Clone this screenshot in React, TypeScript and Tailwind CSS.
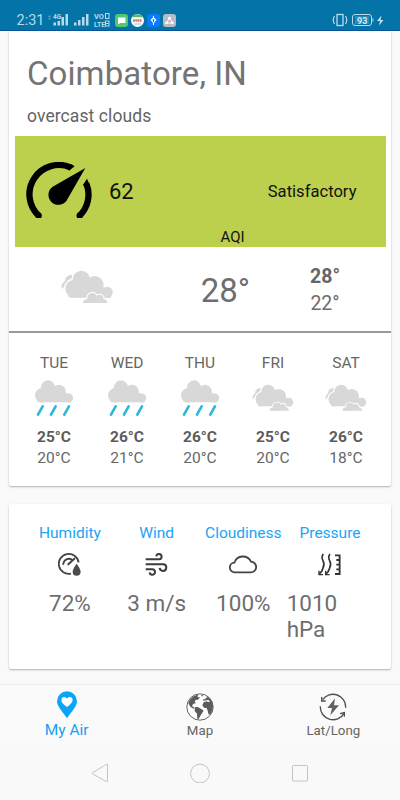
import type { ReactNode } from "react";

type Sky = "rain" | "clouds";

const forecast: { day: string; sky: Sky; high: string; low: string }[] = [
  { day: "TUE", sky: "rain", high: "25°C", low: "20°C" },
  { day: "WED", sky: "rain", high: "26°C", low: "21°C" },
  { day: "THU", sky: "rain", high: "26°C", low: "20°C" },
  { day: "FRI", sky: "clouds", high: "25°C", low: "20°C" },
  { day: "SAT", sky: "clouds", high: "26°C", low: "18°C" },
];

function BigCloud() {
  return (
    <>
      <circle cx="223" cy="116" r="27" />
      <circle cx="244" cy="88" r="26" />
      <circle cx="284" cy="105" r="27" />
      <circle cx="322" cy="127" r="16.500" />
      <path d="M206 136l20-35h60l35 15l12 27H210q-6 0-4-7z" />
    </>
  );
}

function SmallCloud() {
  return (
    <>
      <circle cx="277" cy="144" r="15" />
      <circle cx="299" cy="146" r="11.500" />
      <path d="M249 160q0-13 15-13h45q13 1 13 13z" />
    </>
  );
}

function Overcast({ className }: { className: string }) {
  return (
    <svg viewBox="183 60 157 101" className={className} fill="#d8d8d8">
      <path d="M186 117q-5-14 8-23q2-20 22-20v20l-18 10z" />
      <g fill="#fff" stroke="#fff" strokeWidth="8">
        <BigCloud />
      </g>
      <BigCloud />
      <g fill="#fff" stroke="#fff" strokeWidth="7">
        <SmallCloud />
      </g>
      <SmallCloud />
    </svg>
  );
}

function Rain() {
  return (
    <svg viewBox="105 103 115 108" className="w-[38.3px] h-9" fill="#d8d8d8">
      <circle cx="127" cy="149" r="22" />
      <circle cx="144" cy="125" r="21" />
      <circle cx="177" cy="138" r="20.500" />
      <circle cx="206" cy="157" r="13.500" />
      <path d="M110 162l20-30h48l28 13l8 25h-98q-4 0-6-8z" />
      <path d="M128 182l-14 25M167 182l-14 25M207 182l-14 25" stroke="#2fb8dc" strokeWidth="8" strokeLinecap="round" />
    </svg>
  );
}

function Gauge() {
  return (
    <svg viewBox="78 95 198 170" className="w-[66px] h-[56.7px] -mt-[3px]">
      <path d="M117 257A88 88 0 0 1 213 112" fill="none" stroke="#000" strokeWidth="19" />
      <path d="M259 160A88 88 0 0 1 238 257" fill="none" stroke="#000" strokeWidth="19" />
      <circle cx="116" cy="256" r="9.500" />
      <circle cx="239" cy="256" r="9.500" />
      <path d="M214 102l10 6l-17 13zM261 145l-12 18l3 4l16-6z" />
      <path d="M256 113L203 205A30 30 0 1 1 158 169z" />
    </svg>
  );
}

function HumidityIcon() {
  return (
    <svg viewBox="176 174 70 69" className="w-[23.3px] h-[23px]" fill="none" stroke="#444" strokeWidth="5.500">
      <path d="M215 236A30 30 0 1 1 238 202" />
      <path d="M192 207a17 17 0 0 1 26-13" strokeLinecap="round" />
      <path d="M207 208l18-17" strokeWidth="6" strokeLinecap="round" />
      <path d="M232 206q12 16 12 24a12 12 0 0 1-24 0q0-8 12-24z" fill="#4c4c4c" stroke="none" />
    </svg>
  );
}

function WindIcon() {
  return (
    <svg viewBox="436 174 70 69" className="w-[23.3px] h-[23px]" fill="none" stroke="#3c3c3c" strokeWidth="6">
      <path d="M438 193h41a8 8 0 1 0-9-9" />
      <path d="M438 208h54a10 10 0 1 1-12 11" />
      <path d="M438 223h20a8 8 0 1 1-8 9" />
    </svg>
  );
}

function CloudIcon() {
  return (
    <svg viewBox="88 174 84 69" className="w-7 h-[23px]" fill="none" stroke="#444" strokeWidth="5.500">
      <path d="M106 232a14.500 14.500 0 0 1-2-29a27 27 0 0 1 50-3a16 16 0 0 1-1 32z" strokeLinejoin="round" />
    </svg>
  );
}

function PressureIcon() {
  return (
    <svg viewBox="356 174 70 69" className="w-[23.3px] h-[23px]" fill="none" stroke="#333" strokeWidth="5">
      <path d="M372 177q-7 9-1 20t0 22q-2 10-11 18M392 177q-7 9-1 20t0 22q-2 10-11 18" />
      <path d="M359 227v12h12M379 227v12h12" strokeWidth="4" />
      <path d="M407 181h14v56h-14M411 195h10M411 209h10M411 223h10" strokeWidth="5.500" />
    </svg>
  );
}

function PinIcon() {
  return (
    <svg viewBox="170 47 60 82" className="w-5 h-[27.3px]">
      <path d="M200 48a30 30 0 0 1 30 30c0 16-18 33-30 51c-12-18-30-35-30-51a30 30 0 0 1 30-30z" fill="#0aa5f5" />
      <path d="M200 95c-8-6-17-13-17-21c0-10 12-12 17-4c5-8 17-6 17 4c0 8-9 15-17 21z" fill="#fff" />
    </svg>
  );
}

function GlobeIcon() {
  return (
    <svg viewBox="0 0 84 84" className="w-7 h-7" fill="#5c5c5c">
      <circle cx="42" cy="42" r="39.500" fill="#fff" stroke="#444" strokeWidth="2.500" />
      <path d="M8 27C14 14 25 6 37 5l-3 7l8 1l-7 8l-6-1l-3 7l4 4l-8 1l-4 7l7 5l-3 3l-9-6l-6-10z" />
      <path d="M26 43l9-1l12 7l6 4l-5 8l-5 8l-5 9l-4-1l-1-15l-7-8z" />
      <path d="M58 15l8-3c9 7 15 17 15 27l-1 9l-5 14l-7 3l-3-12l-3-8l-8-1l-5-7l4-9l9-3l5 3l5-3l-5-4l-7 1l-6 1l1-5l6-1z" />
      <path d="M45 6l7 1l-4 4zM50 21l4-2v5z" />
    </svg>
  );
}

function RefreshIcon() {
  return (
    <svg viewBox="358 53 84 84" className="w-7 h-7" fill="none" stroke="#505050" strokeWidth="4">
      <path d="M369 73A38 38 0 0 1 438 97M434 112A38 38 0 0 1 362 93" />
      <path d="M366 65v12h12M421 115l13-3v12" />
      <path d="M406 69l-23 29h14l-5 22l26-30h-15z" fill="#606060" stroke="none" />
    </svg>
  );
}

function StatusBar() {
  return (
    <header className="h-[31px] shrink-0 bg-[#0474a8] border-b border-[#05569a] flex justify-between pt-[9px] px-4 text-[#b5dbec]">
      <div className="flex items-center h-[22px]">
        <span className="text-[14.5px] leading-none w-[31px] pt-[2px] pl-[0.5px]">2:31</span>
        <svg viewBox="0 0 64 22" className="w-16 h-[22px]" fill="#b5dbec">
          <path d="M1 8l1.500-2L4 8zM1 9h3l-1.500 2z" opacity=".5" />
          <text x="6" y="9.500" fontSize="6.500" fontWeight="700">4G</text>
          <path d="M6.500 13.500h2.500v3H6.500zM10.500 12h2.500v4.500h-2.500zM14.500 8h2.500v8.500h-2.500zM18.500 5h2.500v11.500h-2.500zM27 13.500h2.500v3H27zM31 11h2.500v5.500H31zM35 8h2.500v8.500H35zM39 5h2.500v11.500H39z" />
          <text x="47" y="10" fontSize="8" fontWeight="700" textLength="10" lengthAdjust="spacingAndGlyphs">VO</text>
          <text x="47" y="17.500" fontSize="8" fontWeight="700" textLength="11" lengthAdjust="spacingAndGlyphs">LTE</text>
          <g fill="none" stroke="#b5dbec">
            <rect x="58.500" y="4.500" width="3.500" height="5" />
            <rect x="58.500" y="12" width="3.500" height="5" />
            <path d="M58.500 14.500h3.500" />
          </g>
        </svg>
        <div className="flex items-center gap-[3px] ml-1">
          <svg viewBox="0 0 13 13" className="w-[13px] h-[13px]">
            <rect width="13" height="13" rx="3" fill="#51c86f" />
            <path d="M3 3.500h7.500v5.500H5.500L3 10.500z" fill="#fff" />
          </svg>
          <svg viewBox="0 0 13 13" className="w-[13px] h-[13px]">
            <circle cx="6.500" cy="6.500" r="6.500" fill="#fff" />
            <path d="M1 3.200a6.500 6.500 0 0 1 11 0z" fill="#53b965" />
            <path d="M2 6.500h9" stroke="#e56b70" strokeWidth="2.500" strokeDasharray="1.800 .4" />
            <path d="M3 10h7" stroke="#7dbe88" strokeDasharray="1.500 .5" />
          </svg>
          <svg viewBox="0 0 13 13" className="w-[13px] h-[13px]">
            <rect width="13" height="13" rx="3" fill="#087cff" />
            <path d="M6.500 2v9" stroke="#fff" />
            <path d="M6.500 3L9.500 6L6.500 9.500L3.500 6z" fill="#fff" />
            <path d="M6.500 5v3M5.500 6h2" stroke="#087cff" />
          </svg>
          <svg viewBox="0 0 13 13" className="w-[13px] h-[13px]">
            <rect width="13" height="13" rx="3" fill="#b8bac8" />
            <path d="M6.500 4L3.500 9h6z" fill="none" stroke="#fff" />
            <g fill="#fff">
              <circle cx="6.500" cy="4" r="1.300" />
              <circle cx="3.500" cy="9" r="1.300" />
              <circle cx="9.500" cy="9" r="1.300" />
            </g>
          </svg>
        </div>
      </div>
      <svg viewBox="0 0 52 14" className="w-[52px] h-[14px] mt-1" fill="none" stroke="#b5dbec">
        <rect x="5" y="1.500" width="6" height="11" strokeWidth="1.300" />
        <path d="M2.500 3Q0 7 2.500 11M13.500 3Q16 7 13.500 11" strokeWidth="1.200" />
        <rect x="20.500" y="1.500" width="19" height="11" rx="2.500" />
        <path d="M41 5.500v3" />
        <rect x="23" y="3" width="14" height="8" fill="#2b8bb8" stroke="none" />
        <text x="25" y="10.500" fontSize="9" fontWeight="700" fill="#d0e9f4" stroke="none">93</text>
        <path d="M49.500 2.500L45 8h3l-1 4.500L51.500 7h-3z" fill="#c5e4f1" stroke="none" />
      </svg>
    </header>
  );
}

function Detail({ label, value, children }: { label: string; value: string; children: ReactNode }) {
  return (
    <div className="flex flex-col items-center w-[86.7px]">
      <span className="text-[15.5px] leading-5 text-[#22a4f2]">{label}</span>
      <div className="mt-[10px] h-[23px]">{children}</div>
      <span className="mt-[14px] text-[22.5px] leading-[26px] text-[#6e6e6e]">{value}</span>
    </div>
  );
}

export default function App() {
  return (
    <div className="w-[400px] h-[800px] flex flex-col overflow-hidden bg-[#fafafa] font-['Roboto',sans-serif]">
      <StatusBar />

      <main className="flex flex-col h-[653px] px-[9px]">
        <section className="h-[455px] bg-white rounded-b-[2px] shadow-[0_1px_2px_rgba(0,0,0,0.3)]">
          <div className="pt-[22.5px] pl-[18px]">
            <h1 className="text-[33px] leading-10 tracking-[0.003em] text-[#747474]">Coimbatore, IN</h1>
            <p className="mt-2.5 text-[17.5px] leading-6 tracking-[0.005em] text-[#646464]">overcast clouds</p>
          </div>

          <div className="mt-2 mx-[5.5px] h-[111px] bg-[#bcd04d] flex flex-col text-[#111]">
            <div className="flex items-center h-[92px] pt-[21px] pl-[11.5px] pr-[29px]">
              <Gauge />
              <span className="ml-[17px] text-[22px] leading-6">62</span>
              <span className="ml-auto text-[16.6px] leading-6">Satisfactory</span>
            </div>
            <span className="self-center pl-[65px] text-[15px] leading-[20px]">AQI</span>
          </div>

          <div className="flex h-[84.5px] text-[#6e6e6e]">
            <div className="w-[157px] flex justify-center pt-[23px]">
              <Overcast className="w-[52.3px] h-[33.7px]" />
            </div>
            <div className="w-[119px] text-center text-[33px] leading-[87px]">28°</div>
            <div className="w-[80px] flex flex-col items-center pt-[16.5px] leading-[27px] text-[19.5px]">
              <span className="font-bold text-[#666]">28°</span>
              <span>22°</span>
            </div>
          </div>
          <div className="h-0.5 bg-[#999]" />

          <div className="flex px-[8.5px] pt-5 text-[#666]">
            {forecast.map((f) => (
              <div key={f.day} className="w-[73px] flex flex-col items-center text-[15.5px]">
                <span className="leading-[21px]">{f.day}</span>
                <div className="h-[51px] pb-1 flex items-center justify-center">
                  {f.sky === "rain" ? <Rain /> : <Overcast className="w-[41.7px] h-[27.3px]" />}
                </div>
                <span className="mt-[2px] leading-[21px] font-bold text-[#5c5c5c]">{f.high}</span>
                <span className="leading-[21px]">{f.low}</span>
              </div>
            ))}
          </div>
        </section>

        <section className="mt-[18px] h-[165px] bg-white rounded-[2px] shadow-[0_1px_2px_rgba(0,0,0,0.3)] flex pt-[19px] px-[17.6px]">
          <Detail label="Humidity" value="72%">
            <HumidityIcon />
          </Detail>
          <Detail label="Wind" value="3 m/s">
            <WindIcon />
          </Detail>
          <Detail label="Cloudiness" value="100%">
            <CloudIcon />
          </Detail>
          <Detail label="Pressure" value="1010 hPa">
            <PressureIcon />
          </Detail>
        </section>
      </main>

      <nav className="h-[63px] shrink-0 border-t border-[#ededed] grid grid-cols-3 text-[13.3px] text-[#646464]">
        <div className="flex flex-col items-center pt-[6px] text-[#189ff0]">
          <PinIcon />
          <span className="mt-[2px] text-[15.5px] leading-5">My Air</span>
        </div>
        <div className="flex flex-col items-center pt-2">
          <GlobeIcon />
          <span className="leading-5">Map</span>
        </div>
        <div className="flex flex-col items-center pt-2">
          <RefreshIcon />
          <span className="leading-5">Lat/Long</span>
        </div>
      </nav>

      <footer className="h-[53px] shrink-0 bg-[#f9f9f9] flex justify-center gap-20 pt-4">
        <svg viewBox="0 0 20 20" className="w-5 h-5" fill="none" stroke="#c4c4c4">
          <path d="M17.500 2v16.500q0 .8-.8.300L2.500 10.800q-1-.5 0-1.100L16.700 1.200q.8-.4.800.8z" />
        </svg>
        <svg viewBox="0 0 20 20" className="w-5 h-5" fill="none" stroke="#c4c4c4">
          <circle cx="10" cy="10.500" r="9.400" />
        </svg>
        <svg viewBox="0 0 20 20" className="w-5 h-5" fill="none" stroke="#c4c4c4">
          <rect x="2.500" y="2.500" width="15" height="15.500" rx="1" />
        </svg>
      </footer>
    </div>
  );
}
